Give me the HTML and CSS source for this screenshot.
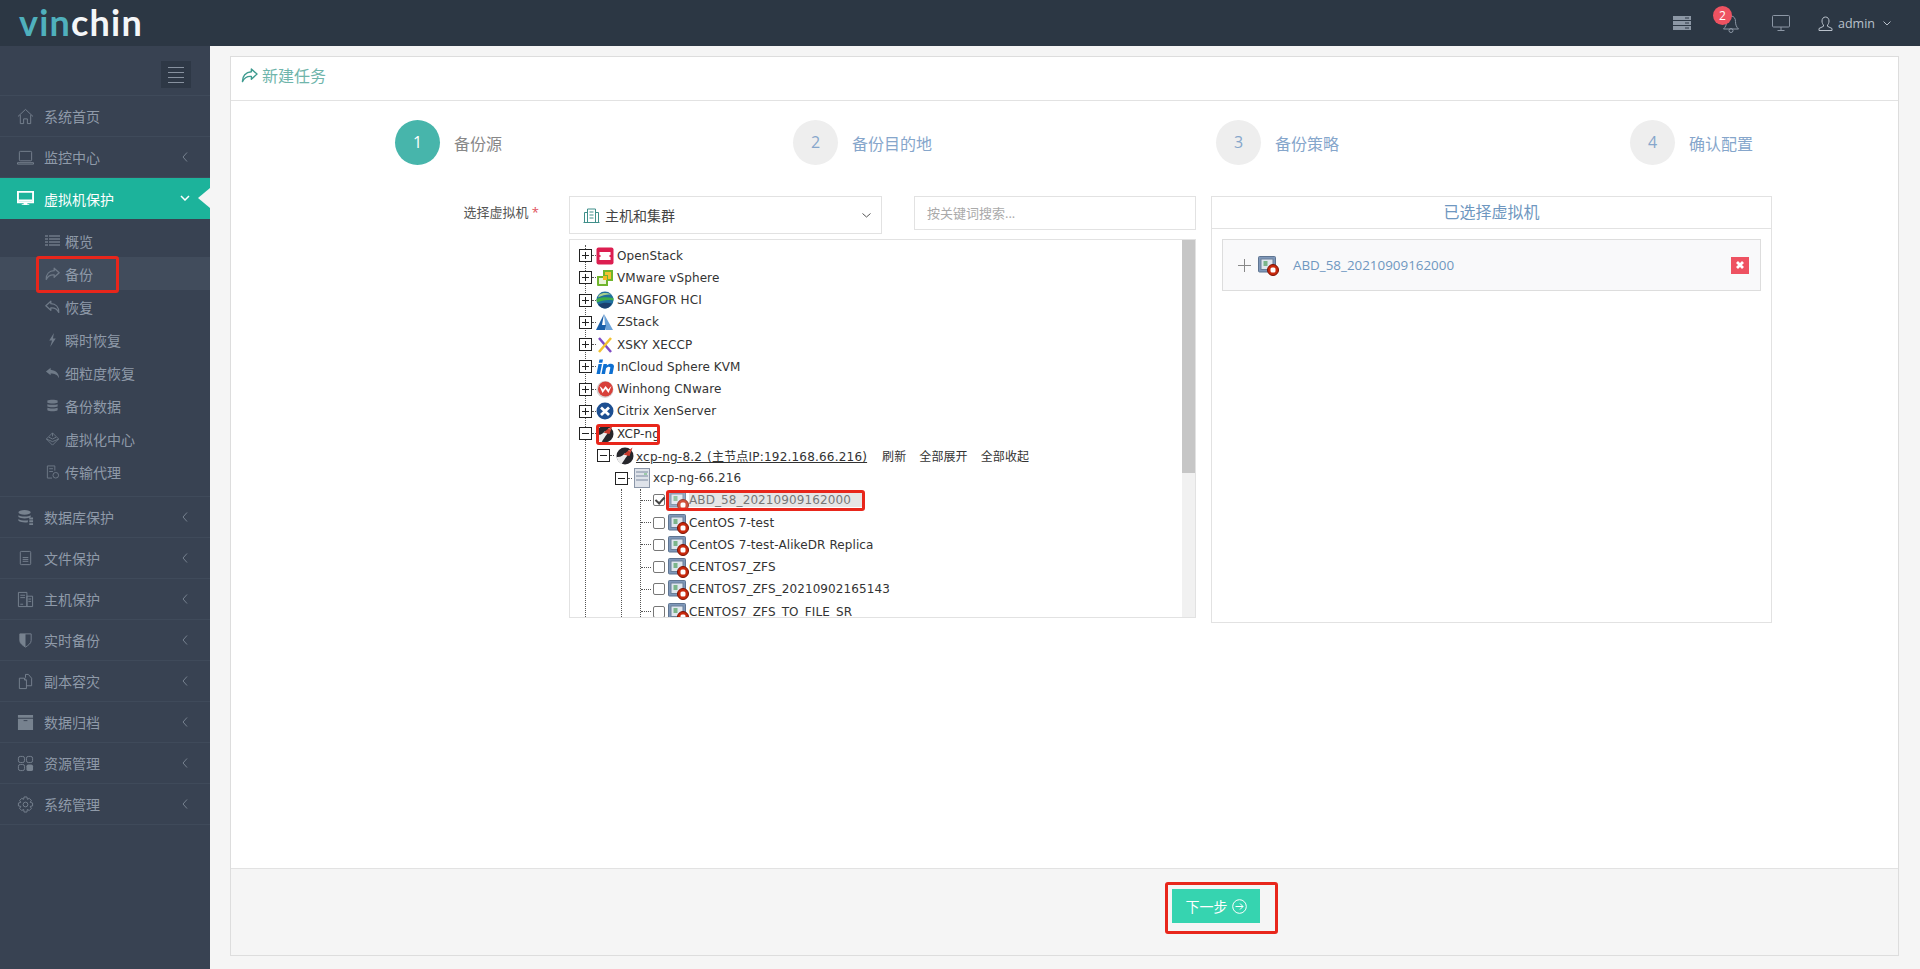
FILE: index.html
```html
<!DOCTYPE html>
<html lang="zh-CN">
<head>
    <meta charset="UTF-8">
    <meta name="viewport" content="width=device-width, initial-scale=1.0">
    <title>新建任务</title>
    <link rel="stylesheet" href="styles.css">
</head>
<body>
    <svg class="defs" width="0" height="0">
      <symbol id="vm" viewBox="0 0 22 22">
        <rect x=".5" y="2.500" width="17" height="15.500" rx="1" fill="#7f98ba" stroke="#5f7591"/>
        <rect x="3" y="5" width="12" height="10.500" fill="#dfe6ee" stroke="#6b7f98"/>
        <rect x="5.500" y="7" width="4" height="5" fill="#7bb58a"/>
        <circle cx="15" cy="16" r="5.500" fill="#c9290c" stroke="#7c1205"/>
        <rect x="12.500" y="13.500" width="5" height="5" rx="1.500" fill="#fff"/>
      </symbol>
      <symbol id="xcp" viewBox="0 0 18 18">
        <circle cx="9" cy="9" r="8.500" fill="#26262b"/>
        <path d="M.8 10c4 .5 6.500-2 8.200-4l2.500 2.500c-2.500 3-4.500 6.500-6 8.700C2.500 16 1 13 .8 10z" fill="#ececec"/>
        <path d="M7.500 7.500L16.500.5 13.500 9l-2.500-.5z" fill="#c93a2c"/>
        <path d="M12.500 3l1.500 1.500" stroke="#f0b0a8"/>
      </symbol>
      <symbol id="arrow" viewBox="0 0 18 16">
        <path d="M11 1l6 5.500-6 5.500V9C7 8.700 3.500 10 1.500 14.500 1.300 8.500 5 4.300 11 4z" fill="none" stroke="currentColor" stroke-width="1.500" stroke-linejoin="round"/>
      </symbol>
      <symbol id="left" viewBox="0 0 6 10">
        <path d="M5 .5L1 5l4 4.500" fill="none" stroke="currentColor"/>
      </symbol>
    </svg>

    <header class="topbar">
      <div class="logo"><span class="logo-vin">vin</span><span class="logo-chin">chin</span></div>
      <div class="top-tools">
        <svg class="tool tool-server" width="18" height="14" viewBox="0 0 18 14"><path d="M0 0h18v4H0zM0 5h18v4H0zM0 10h18v4H0z" fill="#8c97a5"/><path d="M12 2h4M12 7h4M12 12h4" stroke="#2c3744"/></svg>
        <div class="bell">
          <svg width="16" height="18" viewBox="0 0 16 18"><path d="M8 1c3 0 4.500 2.500 4.500 5.500 0 3.500 1 5.500 3 7.500H.5c2-2 3-4 3-7.500C3.500 3.500 5 1 8 1z" fill="none" stroke="#8c97a5"/><circle cx="8" cy="15.500" r="2" fill="none" stroke="#8c97a5"/></svg>
          <span class="badge">2</span>
        </div>
        <svg class="tool tool-screen" width="18" height="16" viewBox="0 0 18 16"><rect x=".5" y=".5" width="17" height="11.500" rx="1" fill="none" stroke="#8c97a5"/><path d="M9 12v3M5.500 15.500h7" stroke="#8c97a5"/></svg>
        <div class="user">
          <svg width="15" height="15" viewBox="0 0 15 15"><path d="M7.500 1C5.200 1 4 2.800 4 5c0 2 .8 3.300 1.500 4v1.300L1 12.500v2h13v-2l-4.500-2.200V9C10.200 8.300 11 7 11 5c0-2.200-1.200-4-3.500-4z" fill="none" stroke="#b9c1cb"/></svg>
          <span>admin</span>
          <svg width="8" height="5" viewBox="0 0 8 5"><path d="M.5.500L4 4 7.500.5" fill="none" stroke="#b9c1cb"/></svg>
        </div>
      </div>
    </header>

    <div class="layout">
      <aside class="sidebar">
        <div class="burger-row">
          <div class="burger"><i></i><i></i><i></i><i></i></div>
        </div>
        <nav>
          <a class="menu-item">
            <svg class="menu-icon" viewBox="0 0 18 18"><path d="M1 9l8-7.500L17 9M3.500 7.500V16.500H7v-5h4v5h3.500V7.500" fill="none" stroke="currentColor"/></svg>
            系统首页
          </a>
          <a class="menu-item">
            <svg class="menu-icon" viewBox="0 0 18 18"><rect x="2.500" y="2.500" width="13" height="10" rx="1" fill="none" stroke="currentColor"/><path d="M.5 14.500h17v1.500H.5z" fill="none" stroke="currentColor"/></svg>
            监控中心
            <svg class="chevron"><use href="#left"/></svg>
          </a>
          <a class="menu-item active">
            <svg class="menu-icon" viewBox="0 0 18 18"><path d="M1 2h16v11H1z" fill="none" stroke="#fff" stroke-width="2"/><path d="M2 10h14v2H2zM7 13h4v2h2v1H5v-1h2z" fill="#fff"/></svg>
            虚拟机保护
            <svg class="chevron-down" width="10" height="6" viewBox="0 0 10 6"><path d="M1 1l4 4 4-4" fill="none" stroke="#fff" stroke-width="1.500"/></svg>
          </a>
          <div class="submenu">
            <a class="sub-item">
              <svg class="sub-icon" viewBox="0 0 15 12"><path d="M0 1h3M4 1h11M0 4h3M4 4h11M0 7h3M4 7h11M0 10h3M4 10h11" stroke="currentColor" stroke-width="1.500"/></svg>
              概览
            </a>
            <a class="sub-item current">
              <svg class="sub-icon"><use href="#arrow"/></svg>
              备份
            </a>
            <a class="sub-item">
              <svg class="sub-icon flip"><use href="#arrow"/></svg>
              恢复
            </a>
            <a class="sub-item">
              <svg class="sub-icon" viewBox="0 0 15 15"><path d="M9 0L4 8h3l-2 7 6-9H8z" fill="currentColor"/></svg>
              瞬时恢复
            </a>
            <a class="sub-item">
              <svg class="sub-icon" viewBox="0 0 16 13"><path d="M6 1L1 5l5 4V7c4 0 7 1 9 5 0-5-3-8-9-9z" fill="currentColor"/></svg>
              细粒度恢复
            </a>
            <a class="sub-item">
              <svg class="sub-icon" viewBox="0 0 15 15"><path d="M2 1.500C4 .5 11 .5 13 1.500v2.500c-2 1-9 1-11 0zM2 5.500c2 1 9 1 11 0V8c-2 1-9 1-11 0zM2 9.500c2 1 9 1 11 0V12c-2 1.500-9 1.500-11 0z" fill="currentColor"/></svg>
              备份数据
            </a>
            <a class="sub-item">
              <svg class="sub-icon" viewBox="0 0 16 16"><path d="M8 1l7 7-7 7-7-7zM1 8l7 3 7-3M8 1v4M4 6l4 2 4-2" fill="none" stroke="currentColor"/></svg>
              虚拟化中心
            </a>
            <a class="sub-item">
              <svg class="sub-icon" viewBox="0 0 15 15"><path d="M10 6V1H2v13h5M4 4h4M4 7h4" fill="none" stroke="currentColor"/><circle cx="11" cy="11" r="3" fill="none" stroke="currentColor"/></svg>
              传输代理
            </a>
          </div>
          <a class="menu-item">
            <svg class="menu-icon" viewBox="0 0 18 18"><ellipse cx="8" cy="3.500" rx="6.500" ry="2.500" fill="currentColor"/><path d="M1.500 6.500c2 2 11 2 13 0v2c-2 2-11 2-13 0zM1.500 10.500c2 2 8 2 10 1.500v2c-2 .5-8 .5-10-1.500zM13 9h4v2h-4zM13 12h4v2h-4zM13 15h4v2h-4z" fill="currentColor"/></svg>
            数据库保护
            <svg class="chevron"><use href="#left"/></svg>
          </a>
          <a class="menu-item">
            <svg class="menu-icon" viewBox="0 0 18 18"><rect x="3.500" y="1.500" width="11" height="14" rx="1" fill="none" stroke="currentColor"/><path d="M6 8h6M6 10h6M6 12h6" stroke="currentColor"/></svg>
            文件保护
            <svg class="chevron"><use href="#left"/></svg>
          </a>
          <a class="menu-item">
            <svg class="menu-icon" viewBox="0 0 18 18"><path d="M1.500 1.500h9v15h-9zM10.500 5.500h6v11h-6zM3.500 4.500h5M3.500 7h5M12 8.500h3M12 11h3M3.500 14h3" fill="none" stroke="currentColor"/></svg>
            主机保护
            <svg class="chevron"><use href="#left"/></svg>
          </a>
          <a class="menu-item">
            <svg class="menu-icon" viewBox="0 0 18 18"><path d="M3 2h12v7c0 3-3 5-6 7-3-2-6-4-6-7z" fill="none" stroke="currentColor"/><path d="M3 2h6v14c-3-2-6-4-6-7z" fill="currentColor"/></svg>
            实时备份
            <svg class="chevron"><use href="#left"/></svg>
          </a>
          <a class="menu-item">
            <svg class="menu-icon" viewBox="0 0 18 18"><path d="M2.500 5.500H8l2 2v9H2.500zM8 5.500v2h2M9 1.500h3l3.500 4v8H10M9 1.500V5" fill="none" stroke="currentColor"/></svg>
            副本容灾
            <svg class="chevron"><use href="#left"/></svg>
          </a>
          <a class="menu-item">
            <svg class="menu-icon" viewBox="0 0 18 18"><path d="M1 1h16v3H1zM1 5h16v12H1z" fill="currentColor"/><path d="M7 7h4" stroke="#384252"/></svg>
            数据归档
            <svg class="chevron"><use href="#left"/></svg>
          </a>
          <a class="menu-item">
            <svg class="menu-icon" viewBox="0 0 18 18"><rect x="1.500" y="1.500" width="6.500" height="6.500" rx="2" fill="none" stroke="currentColor"/><rect x="10" y="1.500" width="6.500" height="6.500" rx="2" fill="none" stroke="currentColor"/><rect x="1.500" y="10" width="6.500" height="6.500" rx="2" fill="none" stroke="currentColor"/><rect x="10" y="10" width="7" height="7" rx="2" fill="currentColor"/></svg>
            资源管理
            <svg class="chevron"><use href="#left"/></svg>
          </a>
          <a class="menu-item">
            <svg class="menu-icon" viewBox="0 0 18 18"><path d="M7.500 1h3l.5 2.500 2-1 2.200 2.200-1.200 2 2.500.8v3l-2.500.5 1.200 2.200-2.200 2.200-2-1.200-.5 2.800h-3L7 14.200l-2 1.200-2.200-2.200L4 11l-2.500-.5v-3L4 6.700l-1.200-2L5 2.500l2 1z" fill="none" stroke="currentColor"/><circle cx="9" cy="9" r="2.500" fill="none" stroke="currentColor"/></svg>
            系统管理
            <svg class="chevron"><use href="#left"/></svg>
          </a>
        </nav>
      </aside>

      <main class="main">
        <section class="panel">
          <div class="panel-title">
            <svg class="title-icon"><use href="#arrow"/></svg>
            新建任务
          </div>

          <div class="panel-body">
            <div class="steps">
              <div class="step step-1 on"><span class="step-num">1</span><span class="step-name">备份源</span></div>
              <div class="step step-2"><span class="step-num">2</span><span class="step-name">备份目的地</span></div>
              <div class="step step-3"><span class="step-num">3</span><span class="step-name">备份策略</span></div>
              <div class="step"><span class="step-num">4</span><span class="step-name">确认配置</span></div>
            </div>

            <div class="form-row">
              <label class="form-label">选择虚拟机 <em>*</em></label>

              <div class="picker">
                <div class="picker-top">
                  <div class="select">
                    <svg width="17" height="15" viewBox="0 0 17 15"><path d="M.5 14.500h16M1.500 14V4.500h3M15.500 14V4.500h-3M4.500 14V1h8v13M6.500 4h4M6.500 7h4M6.500 10h4" fill="none" stroke="#3f8f8a"/></svg>
                    <span>主机和集群</span>
                    <svg class="select-arrow" width="9" height="5" viewBox="0 0 9 5"><path d="M.5.500L4.500 4 8.500.5" fill="none" stroke="#555"/></svg>
                  </div>
                  <input class="search" type="text" placeholder="按关键词搜索...">
                </div>

                <div class="tree-box">
                  <div class="tree-body">
                    <ul class="tree">
                      <li class="node root-node"><i class="exp plus"></i><i class="dots"></i>
                        <svg class="node-icon" viewBox="0 0 18 18"><rect x=".5" y=".5" width="17" height="17" rx="2" fill="#dc1e50"/><rect x="3.500" y="5" width="11" height="8" fill="#fff"/><path d="M3 8h1.500v2H3zM13.500 8H15v2h-1.500z" fill="#dc1e50"/></svg>
                        <span class="name">OpenStack</span></li>
                      <li class="node root-node"><i class="exp plus"></i><i class="dots"></i>
                        <svg class="node-icon" viewBox="0 0 18 18"><path d="M7 1h10v11h-5v5H2a1 1 0 0 1-1-1V7h6z" fill="#6fb52c"/><path d="M9 3h6v7h-3V6H9z" fill="#f5c12e"/><path d="M3 9h4v2h3v4H3z" fill="#e9f3d6"/><path d="M7 7h4v4H7z" fill="#f5b81e"/></svg>
                        <span class="name">VMware vSphere</span></li>
                      <li class="node root-node"><i class="exp plus"></i><i class="dots"></i>
                        <svg class="node-icon" viewBox="0 0 18 18"><circle cx="9" cy="9" r="8.500" fill="#1f6f9e"/><path d="M.5 8C5 6 11 6 17.500 7v2.500C11 8.500 6 9.500 .8 11.500z" fill="#3fae49"/><path d="M2 13.500c5-2 9-2 14-1-2 3-4 5-7 5-3 0-5-2-7-4z" fill="#1c3f6e"/><path d="M3 4c3-2.500 8-2.500 12-.5C11 3 7 4 2 6.500z" fill="#a8d08d"/></svg>
                        <span class="name">SANGFOR HCI</span></li>
                      <li class="node root-node"><i class="exp plus"></i><i class="dots"></i>
                        <svg class="node-icon" viewBox="0 0 18 18"><path d="M8 1l9 16H9.500z" fill="#6da3d8"/><path d="M8 1L0 17h9l1-5H6z" fill="#1a5fa8"/></svg>
                        <span class="name">ZStack</span></li>
                      <li class="node root-node"><i class="exp plus"></i><i class="dots"></i>
                        <svg class="node-icon" viewBox="0 0 18 18"><path d="M3 2l12 14" stroke="#7e4bc4" stroke-width="2.500"/><path d="M15 2L3 16" stroke="#f2c230" stroke-width="2.500"/></svg>
                        <span class="name">XSKY XECCP</span></li>
                      <li class="node root-node"><i class="exp plus"></i><i class="dots"></i>
                        <svg class="node-icon" viewBox="0 0 18 18"><path d="M2.500 6h3.500l-2 10H.5zM3.500 1.500H7l-.7 3.300H2.800zM7.500 6H11l-.3 1.500c2.500-2.300 7.300-2.500 7.300 1L16.500 16H13l1.400-6.500c-1-1.300-3.200-.8-4.400 1L9 16H5.500z" fill="#0d6fd1"/></svg>
                        <span class="name">InCloud Sphere KVM</span></li>
                      <li class="node root-node"><i class="exp plus"></i><i class="dots"></i>
                        <svg class="node-icon" viewBox="0 0 18 18"><circle cx="9" cy="9.500" r="8.500" fill="#d8d3d3"/><circle cx="9.500" cy="9" r="7.500" fill="#d8403a"/><path d="M3.500 6l3 7 3-4 3 4 3-7-2 2-1 1.500L9.500 6 7 9.500 6 8z" fill="#fff"/></svg>
                        <span class="name">Winhong CNware</span></li>
                      <li class="node root-node"><i class="exp plus"></i><i class="dots"></i>
                        <svg class="node-icon" viewBox="0 0 18 18"><circle cx="9" cy="9" r="8.500" fill="#1d4f91"/><path d="M5 5.500l8 7.500M13 5.500L5 13" stroke="#fff" stroke-width="2.800"/></svg>
                        <span class="name">Citrix XenServer</span></li>
                      <li class="node root-node"><i class="exp"></i><i class="dots"></i>
                        <svg class="node-icon"><use href="#xcp"/></svg>
                        <span class="name">XCP-ng</span></li>
                      <li>
                        <ul class="pool">
                          <li class="node"><i class="exp"></i><i class="dots"></i>
                            <svg class="node-icon"><use href="#xcp"/></svg>
                            <u class="name">xcp-ng-8.2 (主节点IP:192.168.66.216)</u>
                            <span class="node-tools"><a>刷新</a><a>全部展开</a><a>全部收起</a></span></li>
                          <li>
                            <ul class="host">
                              <li class="node"><i class="exp"></i><i class="dots"></i>
                                <svg class="server-icon" viewBox="0 0 16 20"><rect x=".5" y=".5" width="15" height="19" fill="#dfe3ea" stroke="#8b96a8"/><path d="M2 4h12M2 8h12M2 12h12" stroke="#7d8aa0"/><path d="M10 6h3" stroke="#58b368"/></svg>
                                <span class="name">xcp-ng-66.216</span></li>
                              <li>
                                <ul class="host-line">
                                  <li>
                                    <ul class="vms">
                                      <li class="node vm picked"><i class="dots"></i><i class="check on"></i><svg class="vm-icon"><use href="#vm"/></svg><span class="name">ABD_58_20210909162000</span></li>
                                      <li class="node vm"><i class="dots"></i><i class="check"></i><svg class="vm-icon"><use href="#vm"/></svg><span class="name">CentOS 7-test</span></li>
                                      <li class="node vm"><i class="dots"></i><i class="check"></i><svg class="vm-icon"><use href="#vm"/></svg><span class="name">CentOS 7-test-AlikeDR Replica</span></li>
                                      <li class="node vm"><i class="dots"></i><i class="check"></i><svg class="vm-icon"><use href="#vm"/></svg><span class="name">CENTOS7_ZFS</span></li>
                                      <li class="node vm"><i class="dots"></i><i class="check"></i><svg class="vm-icon"><use href="#vm"/></svg><span class="name">CENTOS7_ZFS_20210902165143</span></li>
                                      <li class="node vm"><i class="dots"></i><i class="check"></i><svg class="vm-icon"><use href="#vm"/></svg><span class="name">CENTOS7_ZFS_TO_FILE_SR</span></li>
                                    </ul>
                                  </li>
                                </ul>
                              </li>
                            </ul>
                          </li>
                        </ul>
                      </li>
                    </ul>
                  </div>
                  <div class="scrollbar"><div class="thumb"></div></div>
                </div>
              </div>

              <div class="chosen">
                <div class="chosen-head">已选择虚拟机</div>
                <div class="chosen-item">
                  <svg class="chosen-plus" width="13" height="13" viewBox="0 0 13 13"><path d="M6.500 0v13M0 6.500h13" stroke="#888"/></svg>
                  <svg class="chosen-vm"><use href="#vm"/></svg>
                  <span class="chosen-name">ABD_58_20210909162000</span>
                  <span class="remove"><svg width="10" height="10" viewBox="0 0 10 10"><path d="M2 2l6 6M8 2l-6 6" stroke="#fff" stroke-width="2.800"/></svg></span>
                </div>
              </div>
            </div>
          </div>

          <div class="panel-foot">
            <button class="next-btn">下一步
              <svg width="15" height="15" viewBox="0 0 15 15"><circle cx="7.500" cy="7.500" r="6.800" fill="none" stroke="#fff"/><path d="M3.500 7.500h7.500M8 4.500l3 3-3 3" fill="none" stroke="#fff"/></svg>
            </button>
          </div>
        </section>
      </main>
    </div>

    <div class="mark mark-menu"></div>
    <div class="mark mark-xcp"></div>
    <div class="mark mark-vm"></div>
    <div class="mark mark-next"></div>
</body>
</html>
```

FILE: styles.css
```css
* {
  box-sizing: border-box;
}

html, body {
  height: 100%;
}

body {
  margin: 0;
  overflow: hidden;
  font-family: "Open Sans", "Noto Sans CJK SC", sans-serif;
  font-size: 14px;
  color: #555;
  background: #f5f5f5;
}

ul {
  list-style: none;
  margin: 0;
  padding: 0;
}

.defs {
  position: absolute;
}

.topbar {
  display: flex;
  align-items: center;
  height: 46px;
  background: #2c3744;
}

.logo {
  margin-left: 19px;
  margin-top: -3px;
  font-family: "Lato", sans-serif;
  font-size: 36px;
  font-weight: 700;
  letter-spacing: 1.2px;
  line-height: 46px;
}

.logo-vin {
  color: #4fb0bd;
}

.logo-chin {
  color: #f4f6f8;
}

.top-tools {
  display: flex;
  align-items: center;
  margin-left: auto;
  margin-right: 29px;
}

.bell {
  position: relative;
  display: flex;
  margin-left: 32px;
  margin-top: 2px;
}

.badge {
  position: absolute;
  left: -10px;
  top: -9px;
  width: 19px;
  height: 19px;
  border-radius: 50%;
  background: #ee5261;
  color: #fff;
  font-size: 12px;
  line-height: 19px;
  text-align: center;
}

.tool-screen {
  margin-left: 33px;
}

.user {
  display: flex;
  align-items: center;
  gap: 5px;
  margin-left: 28px;
  font-size: 12.500px;
  color: #b9c1cb;
}

.user svg:last-child {
  margin-left: 3px;
}

.layout {
  display: flex;
  height: 923px;
}

.sidebar {
  flex: 0 0 210px;
  background: #384252;
  color: #8f9aa9;
}

.burger-row {
  display: flex;
  justify-content: flex-end;
  height: 50px;
  padding: 15px 19px 0 0;
  border-bottom: 1px solid #3f4a5a;
}

.burger {
  display: flex;
  flex-direction: column;
  justify-content: center;
  gap: 4px;
  width: 30px;
  height: 27px;
  padding: 0 7px;
  background: #2e3846;
}

.burger i {
  display: block;
  height: 1px;
  background: #87919f;
}

.menu-item {
  display: flex;
  align-items: center;
  height: 41px;
  padding-left: 17px;
  border-bottom: 1px solid #3f4a5a;
  position: relative;
}

.menu-icon {
  width: 17px;
  height: 17px;
  margin-right: 10px;
  color: #77828f;
}

.chevron {
  position: absolute;
  left: 182px;
  top: 15px;
  width: 6px;
  height: 10px;
  color: #77828f;
}

.menu-item.active {
  background: #1cb39b;
  color: #fff;
  border-bottom: 0;
}

.menu-item.active::after {
  content: "";
  position: absolute;
  right: 0;
  top: 10px;
  border: 10px solid transparent;
  border-left: 0;
  border-right: 12px solid #f5f5f5;
}

.chevron-down {
  position: absolute;
  left: 180px;
  top: 17px;
}

.submenu {
  padding: 5px 0 8px;
  border-bottom: 1px solid #3f4a5a;
}

.sub-item {
  display: flex;
  align-items: center;
  height: 33px;
  padding-left: 45px;
}

.sub-item.current {
  background: #414c5c;
}

.sub-icon {
  width: 15px;
  height: 14px;
  margin-right: 5px;
  color: #6f7a88;
}

.sub-icon.flip {
  transform: scaleX(-1);
}

.main {
  flex: 1;
  padding: 10px 21px 0 20px;
}

.panel {
  display: flex;
  flex-direction: column;
  height: 900px;
  background: #fff;
  border: 1px solid #ddd;
}

.panel-title {
  display: flex;
  align-items: center;
  height: 44px;
  padding: 0 0 7px 10px;
  border-bottom: 1px solid #e2e2e2;
  font-size: 16px;
  color: #6fb5ab;
}

.title-icon {
  width: 17px;
  height: 15px;
  margin-right: 4px;
  color: #3f9b90;
}

.panel-body {
  flex: 1;
  padding-top: 19px;
}

.steps {
  display: flex;
  padding-left: 164px;
}

.step {
  display: flex;
  align-items: center;
  color: #86a6cb;
  font-size: 16px;
}

.step-1 {
  width: 398px;
}

.step-2 {
  width: 423px;
}

.step-3 {
  width: 414px;
}

.step-num {
  width: 45px;
  height: 45px;
  margin-right: 14px;
  border-radius: 50%;
  background: #eee;
  line-height: 45px;
  text-align: center;
}

.step.on .step-num {
  background: #47b5ab;
  color: #fff;
}

.step.on .step-name {
  color: #888;
}

.form-row {
  display: flex;
  align-items: flex-start;
  margin-top: 31px;
}

.form-label {
  flex: 0 0 308px;
  margin-right: 30px;
  padding-top: 6px;
  font-size: 13px;
  color: #555;
  text-align: right;
}

.form-label em {
  font-style: normal;
  color: #e0505c;
}

.picker {
  width: 627px;
}

.picker-top {
  display: flex;
  align-items: flex-start;
  gap: 32px;
}

.select {
  display: flex;
  align-items: center;
  width: 313px;
  height: 38px;
  padding: 0 10px 0 13px;
  border: 1px solid #e2e2e2;
  color: #444;
}

.select span {
  margin-left: 5px;
}

.select-arrow {
  margin-left: auto;
}

.search {
  width: 282px;
  height: 34px;
  padding: 0 12px;
  border: 1px solid #e2e2e2;
  outline: 0;
  font-family: inherit;
  font-size: 13px;
}

.search::placeholder {
  color: #aaa;
}

.tree-box {
  display: flex;
  height: 379px;
  margin-top: 5px;
  border: 1px solid #e2e2e2;
  overflow: hidden;
}

.tree-body {
  flex: 1;
  padding-top: 4.500px;
  overflow: hidden;
  font-family: "DejaVu Sans", "Noto Sans CJK SC", sans-serif;
  font-size: 12px;
  letter-spacing: .1px;
  color: #333;
}

.tree {
  margin-left: 15px;
  border-left: 1px dotted #555;
}

.node {
  display: flex;
  align-items: center;
  height: 22.250px;
  white-space: nowrap;
}

.root-node {
  margin-left: -7px;
}

.exp {
  position: relative;
  flex: 0 0 13px;
  height: 13px;
  border: 1px solid #222;
  background: #fff;
}

.exp::before {
  content: "";
  position: absolute;
  left: 2px;
  right: 2px;
  top: 5px;
  height: 1px;
  background: #222;
}

.exp.plus::after {
  content: "";
  position: absolute;
  top: 2px;
  bottom: 2px;
  left: 5px;
  width: 1px;
  background: #222;
}

.dots {
  flex: 0 0 4px;
  border-top: 1px dotted #555;
}

.node-icon {
  flex: 0 0 18px;
  width: 18px;
  height: 18px;
  margin-right: 3px;
}

.pool {
  margin-left: 11px;
}

.pool > .node .name {
  margin-left: -1px;
  letter-spacing: .2px;
  word-spacing: 1px;
}

.node-tools {
  display: flex;
  gap: 13px;
  margin-left: 15px;
  font-family: "Noto Sans CJK SC", sans-serif;
}

.pool > .node .node-icon {
  margin-left: 2px;
}

.host {
  margin-left: 18px;
}

.server-icon {
  width: 16px;
  height: 20px;
  margin: 0 3px 0 2px;
}

.host-line {
  margin-left: 6px;
  border-left: 1px dotted #555;
}

.vms {
  margin-left: 18px;
  border-left: 1px dotted #555;
}

.vm .dots {
  flex-basis: 10px;
}

.check {
  position: relative;
  flex: 0 0 12px;
  height: 12px;
  margin-left: 2px;
  border: 1px solid #777;
  border-radius: 2px;
  background: #fff;
}

.check.on::after {
  content: "";
  position: absolute;
  left: 2.500px;
  top: 0;
  width: 4px;
  height: 7px;
  border: solid #444;
  border-width: 0 2px 2px 0;
  transform: rotate(42deg);
}

.vm-icon {
  flex: 0 0 22px;
  width: 22px;
  height: 22px;
  margin: 0 -1px 0 3px;
}

.vm .name {
  padding-right: 12px;
}

.picked .name {
  background: #e6e6e6;
  color: #777;
}

.picked .vm-icon {
  opacity: .8;
}

.scrollbar {
  flex: 0 0 13px;
  background: #f1f1f1;
}

.thumb {
  height: 233px;
  background: #c6c6c6;
}

.chosen {
  width: 561px;
  height: 427px;
  margin-left: 15px;
  border: 1px solid #e2e2e2;
}

.chosen-head {
  height: 32px;
  border-bottom: 1px solid #e2e2e2;
  font-size: 16px;
  line-height: 30px;
  color: #6f97c0;
  text-align: center;
}

.chosen-item {
  display: flex;
  align-items: center;
  height: 52px;
  margin: 10px 10px 0;
  padding: 0 11px 0 15px;
  border: 1px solid #ddd;
  background: #f9f9fa;
}

.chosen-vm {
  width: 22px;
  height: 22px;
  margin-left: 7px;
}

.chosen-name {
  margin-left: 13px;
  font-size: 13.400px;
  color: #6f97c0;
}

.remove {
  display: flex;
  align-items: center;
  justify-content: center;
  width: 18px;
  height: 17px;
  margin-left: auto;
  background: #ee5261;
}

.panel-foot {
  height: 87px;
  padding: 20px 0 0 941px;
  background: #f5f5f5;
  border-top: 1px solid #e2e2e2;
}

.next-btn {
  display: flex;
  align-items: center;
  justify-content: center;
  gap: 4px;
  width: 88px;
  height: 34px;
  border: 0;
  background: #36d4b0;
  color: #fff;
  font-family: inherit;
  font-size: 14px;
}

/* red boxes drawn on top of the screenshot */
.mark {
  position: absolute;
  border: 3px solid #e8261b;
  border-radius: 3px;
}

.mark-menu {
  left: 36px;
  top: 256px;
  width: 83px;
  height: 37px;
}

.mark-xcp {
  left: 596px;
  top: 424px;
  width: 64px;
  height: 21px;
}

.mark-vm {
  left: 666px;
  top: 490px;
  width: 199px;
  height: 21px;
}

.mark-next {
  left: 1165px;
  top: 882px;
  width: 113px;
  height: 52px;
}
```
